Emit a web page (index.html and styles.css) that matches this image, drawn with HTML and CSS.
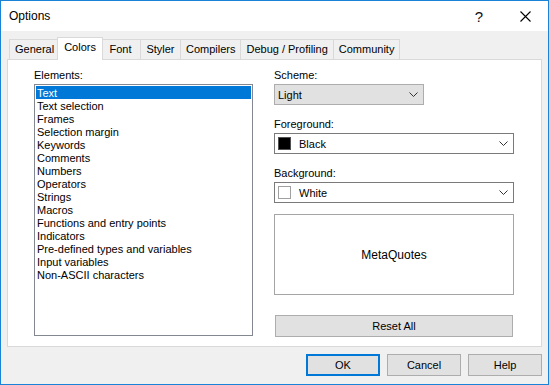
FILE: index.html
```html
<!DOCTYPE html>
<html>
<head>
<meta charset="utf-8">
<link rel="stylesheet" href="styles.css">
</head>
<body>
<div class="window">
  <div class="titlebar">
    <span class="title">Options</span>
    <div class="tbuttons">
      <span class="tbtn help">?</span>
      <span class="tbtn close"><svg width="11" height="11" viewBox="0 0 11 11"><path d="M0.5 0.5 L10.5 10.5 M10.5 0.5 L0.5 10.5" stroke="#000" stroke-width="1.1" fill="none"/></svg></span>
    </div>
  </div>
  <div class="tabs">
    <div class="tab">General</div>
    <div class="tab active">Colors</div>
    <div class="tab">Font</div>
    <div class="tab">Styler</div>
    <div class="tab">Compilers</div>
    <div class="tab">Debug / Profiling</div>
    <div class="tab">Community</div>
  </div>
  <div class="panel">
    <div class="col">
      <div class="label">Elements:</div>
      <div class="listbox">
        <div class="item selected">Text</div>
        <div class="item">Text selection</div>
        <div class="item">Frames</div>
        <div class="item">Selection margin</div>
        <div class="item">Keywords</div>
        <div class="item">Comments</div>
        <div class="item">Numbers</div>
        <div class="item">Operators</div>
        <div class="item">Strings</div>
        <div class="item">Macros</div>
        <div class="item">Functions and entry points</div>
        <div class="item">Indicators</div>
        <div class="item">Pre-defined types and variables</div>
        <div class="item">Input variables</div>
        <div class="item">Non-ASCII characters</div>
      </div>
    </div>
    <div class="col right">
      <div class="label">Scheme:</div>
      <div class="combo scheme">
        <span class="ctext">Light</span>
        <svg class="chev" width="9" height="5" viewBox="0 0 9 5"><path d="M0.5 0.5 L4.5 4.5 L8.5 0.5" stroke="#333" fill="none"/></svg>
      </div>
      <div class="label gap">Foreground:</div>
      <div class="combo color">
        <span class="swatch black"></span>
        <span class="ctext">Black</span>
        <svg class="chev" width="9" height="5" viewBox="0 0 9 5"><path d="M0.5 0.5 L4.5 4.5 L8.5 0.5" stroke="#333" fill="none"/></svg>
      </div>
      <div class="label gap">Background:</div>
      <div class="combo color">
        <span class="swatch white"></span>
        <span class="ctext">White</span>
        <svg class="chev" width="9" height="5" viewBox="0 0 9 5"><path d="M0.5 0.5 L4.5 4.5 L8.5 0.5" stroke="#333" fill="none"/></svg>
      </div>
      <div class="preview">MetaQuotes</div>
      <div class="btn reset">Reset All</div>
    </div>
  </div>
  <div class="buttons">
    <div class="btn dlg default">OK</div>
    <div class="btn dlg">Cancel</div>
    <div class="btn dlg">Help</div>
  </div>
</div>
</body>
</html>
```

FILE: styles.css
```css
html, body {
  margin: 0;
  padding: 0;
}
body {
  font-family: "Liberation Sans", Arial, sans-serif;
  font-size: 11px;
  color: #000;
  background: #fff;
}
.window {
  width: 549px;
  height: 385px;
  box-sizing: border-box;
  border: 1px solid #1883d7;
  background: #f0f0f0;
  display: flex;
  flex-direction: column;
}
.titlebar {
  height: 30px;
  background: #fff;
  display: flex;
  align-items: center;
  padding-left: 8px;
  flex: none;
}
.title {
  font-size: 12px;
  flex: 1;
}
.tbuttons {
  display: flex;
  height: 30px;
}
.tbtn {
  width: 46px;
  height: 30px;
  display: flex;
  align-items: center;
  justify-content: center;
}
.tbtn.help {
  font-size: 15px;
  padding-top: 1px;
  box-sizing: border-box;
  color: #111;
}
.tabs {
  display: flex;
  align-items: flex-end;
  height: 22px;
  margin: 6px 0 0 8px;
  position: relative;
  z-index: 1;
  flex: none;
}
.tab {
  height: 20px;
  box-sizing: border-box;
  min-width: 41px;
  padding: 0 5px;
  border: 1px solid #d9d9d9;
  border-bottom: none;
  background: #f0f0f0;
  line-height: 19px;
  text-align: center;
  margin-left: -1px;
  white-space: nowrap;
}
.tab:first-child {
  margin-left: 0;
}
.tab.active {
  height: 23px;
  min-width: 45px;
  padding: 0 6px;
  margin-left: -3px;
  margin-right: -2px;
  margin-bottom: -1px;
  background: #fff;
  position: relative;
  z-index: 2;
  line-height: 19px;
}
.panel {
  margin: 0 6px;
  height: 288px;
  box-sizing: border-box;
  border: 1px solid #d9d9d9;
  background: #fff;
  display: grid;
  grid-template-columns: 219px 240px;
  column-gap: 21px;
  align-items: start;
  padding: 8px 0 0 26px;
  flex: none;
}
.col {
  display: flex;
  flex-direction: column;
}
.label {
  height: 14px;
  line-height: 14px;
  margin-bottom: 2px;
}
.label.gap {
  margin-top: 12px;
}
.listbox {
  height: 252px;
  box-sizing: border-box;
  border: 1px solid #828790;
  padding: 1px;
}
.item {
  height: 13px;
  line-height: 14px;
  padding-left: 1px;
  white-space: nowrap;
}
.item.selected {
  background: #0078d7;
  color: #fff;
}
.combo {
  height: 21px;
  box-sizing: border-box;
  border: 1px solid #7a7a7a;
  background: #fff;
  display: flex;
  align-items: center;
  padding: 0 5px 0 3px;
}
.combo.scheme {
  width: 150px;
  background: #e1e1e1;
  border-color: #adadad;
}
.ctext {
  flex: 1;
}
.chev {
  display: block;
  flex: none;
}
.swatch {
  width: 13px;
  height: 13px;
  box-sizing: border-box;
  margin-right: 8px;
  flex: none;
}
.swatch.black {
  background: #000;
  border: 1px solid #505050;
}
.swatch.white {
  background: #fff;
  border: 1px solid #a0a0a0;
}
.preview {
  margin-top: 11px;
  height: 81px;
  box-sizing: border-box;
  border: 1px solid #a5a5a5;
  display: flex;
  align-items: center;
  justify-content: center;
  font-size: 12px;
}
.btn {
  height: 22px;
  box-sizing: border-box;
  border: 1px solid #adadad;
  background: #e1e1e1;
  display: flex;
  align-items: center;
  justify-content: center;
}
.reset {
  margin: 20px 1px 0;
}
.buttons {
  display: flex;
  justify-content: flex-end;
  gap: 7px;
  margin: 7px 6px 0 0;
  flex: none;
}
.dlg {
  width: 74px;
}
.dlg.default {
  border: 2px solid #0078d7;
}
```
